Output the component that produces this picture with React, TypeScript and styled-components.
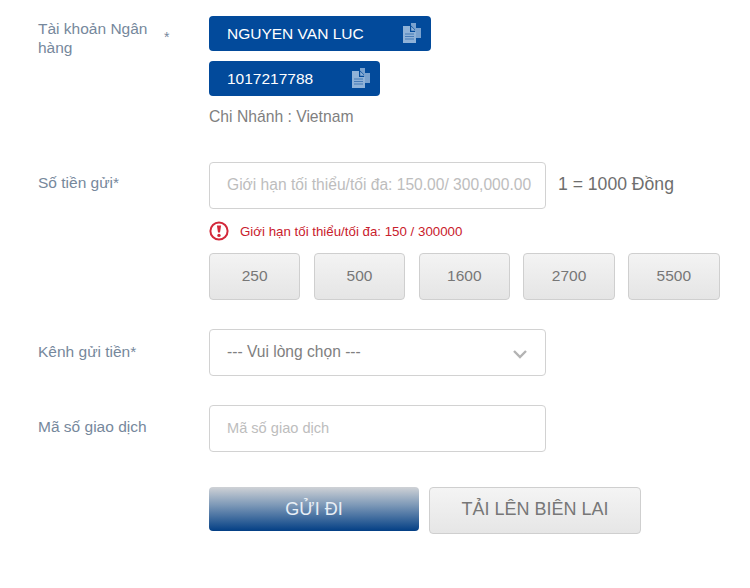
import React from 'react';
import styled, { createGlobalStyle } from 'styled-components';

const GlobalStyle = createGlobalStyle`
  html, body {
    margin: 0;
    background: #ffffff;
    font-family: "Liberation Sans", Arial, sans-serif;
  }
`;

const Page = styled.div`
  width: 750px;
  height: 588px;
  padding: 16px 30px 0 38px;
  box-sizing: border-box;
  overflow: hidden;
`;

const Row = styled.div<{ $mb: number }>`
  display: grid;
  grid-template-columns: 171px 337px auto;
  margin-bottom: ${(p) => p.$mb}px;
`;

const LabelCell = styled.div<{ $pt: number }>`
  display: flex;
  align-items: flex-start;
  padding-top: ${(p) => p.$pt}px;
  color: #76889c;
  font-size: 15.5px;
  line-height: 19px;
`;

const LabelText = styled.span`
  width: 118px;
`;

const Star = styled.span`
  margin-left: 8px;
  margin-top: 9px;
  font-size: 14px;
`;

const Stack = styled.div`
  grid-column: 2 / 4;
  display: flex;
  flex-direction: column;
  align-items: flex-start;
`;

const CopyPill = styled.div<{ $w: number }>`
  width: ${(p) => p.$w}px;
  height: 35px;
  margin-bottom: 10px;
  padding: 0 9px 0 18px;
  box-sizing: border-box;
  display: flex;
  align-items: center;
  justify-content: space-between;
  background: #024a9b;
  border-radius: 4px;
  color: #ffffff;
  font-size: 15.5px;
`;

const Branch = styled.div`
  color: #7f7f7f;
  font-size: 15.7px;
  line-height: 18px;
  margin-top: 2px;
`;

const TextBox = styled.input<{ $fs: number }>`
  width: 337px;
  height: 47px;
  padding: 0 6px 2px 17px;
  box-sizing: border-box;
  border: 1px solid #d2d2d2;
  border-radius: 4px;
  background: #ffffff;
  font-family: inherit;
  font-size: ${(p) => p.$fs}px;
  outline: none;

  &::placeholder {
    color: #bdbdbd;
    opacity: 1;
  }
`;

const Rate = styled.div`
  display: flex;
  align-items: center;
  height: 47px;
  padding-bottom: 2px;
  box-sizing: border-box;
  margin-left: 12px;
  color: #6e6e6e;
  font-size: 17.6px;
  white-space: nowrap;
`;

const ErrorLine = styled.div`
  grid-column: 2 / 4;
  display: flex;
  align-items: center;
  gap: 11px;
  height: 20px;
  margin-top: 12px;
  color: #c9202c;
  font-size: 13.3px;
`;

const Amounts = styled.div`
  grid-column: 2 / 4;
  display: flex;
  gap: 13.4px;
  margin-top: 12px;
`;

const AmountButton = styled.button`
  width: 91.4px;
  height: 47px;
  padding: 0 0 2px;
  border: 1px solid #cfcfcf;
  border-radius: 4px;
  background: linear-gradient(#f3f3f3, #e5e5e5);
  color: #777777;
  font-family: inherit;
  font-size: 15.5px;
`;

const SelectBox = styled.div`
  width: 337px;
  height: 47px;
  padding: 0 17px 2px;
  box-sizing: border-box;
  display: flex;
  align-items: center;
  justify-content: space-between;
  border: 1px solid #d2d2d2;
  border-radius: 4px;
  color: #808080;
  font-size: 15.6px;
`;

const ChevronWrap = styled.span`
  display: flex;
  margin-top: 4px;
`;

const Actions = styled.div`
  display: flex;
  align-items: flex-start;
  gap: 10px;
  margin-left: 171px;
`;

const SubmitButton = styled.button`
  width: 210px;
  height: 44px;
  padding: 0;
  border: 0;
  border-radius: 4px;
  background: linear-gradient(#cfd2d6, #7f9ab8 40%, #033f85);
  color: #e8eff6;
  font-family: inherit;
  font-size: 18px;
`;

const UploadButton = styled.button`
  width: 212px;
  height: 47px;
  padding: 0 0 2px;
  border: 1px solid #cfcfcf;
  border-radius: 4px;
  background: linear-gradient(#f4f4f4, #e6e6e6);
  color: #777777;
  font-family: inherit;
  font-size: 18px;
`;

function CopyIcon() {
  return (
    <svg width="20" height="21" viewBox="0 0 20 21" fill="#8fb2d8">
      <path d="M9 0h5v5h5v10h-6V6.5L9 2.5z" opacity="0.85" />
      <path d="M1 3h7v6h6v11H1z" />
      <path d="M9.2 3.5l4.3 4.3H9.2z" />
      <path d="M3 11h9M3 13.5h9M3 16h9" stroke="#3d74b3" strokeWidth="0.9" />
    </svg>
  );
}

function AlertIcon() {
  return (
    <svg width="20" height="20" viewBox="0 0 20 20">
      <circle cx="10" cy="10" r="8.6" fill="none" stroke="#d3283a" strokeWidth="2" />
      <path d="M7.9 4.6h4.2L11 11.6H9z" fill="#d3283a" />
      <circle cx="10" cy="14.4" r="1.7" fill="#d3283a" />
    </svg>
  );
}

function Chevron() {
  return (
    <svg width="16" height="10" viewBox="0 0 16 10" fill="none">
      <path d="M2 2l6 6 6-6" stroke="#b3b3b3" strokeWidth="2.4" />
    </svg>
  );
}

const amounts = [250, 500, 1600, 2700, 5500];

export default function App() {
  return (
    <Page>
      <GlobalStyle />
      <Row $mb={36}>
        <LabelCell $pt={3}>
          <LabelText>Tài khoản Ngân hàng</LabelText>
          <Star>*</Star>
        </LabelCell>
        <Stack>
          <CopyPill $w={222}>
            NGUYEN VAN LUC
            <CopyIcon />
          </CopyPill>
          <CopyPill $w={171}>
            1017217788
            <CopyIcon />
          </CopyPill>
          <Branch>Chi Nhánh : Vietnam</Branch>
        </Stack>
      </Row>
      <Row $mb={29}>
        <LabelCell $pt={11}>Số tiền gửi*</LabelCell>
        <TextBox $fs={15.6} placeholder="Giới hạn tối thiểu/tối đa: 150.00/ 300,000.00" />
        <Rate>1 = 1000 Đồng</Rate>
        <ErrorLine>
          <AlertIcon />
          Giới hạn tối thiểu/tối đa: 150 / 300000
        </ErrorLine>
        <Amounts>
          {amounts.map((a) => (
            <AmountButton key={a}>{a}</AmountButton>
          ))}
        </Amounts>
      </Row>
      <Row $mb={29}>
        <LabelCell $pt={13}>Kênh gửi tiền*</LabelCell>
        <SelectBox>
          --- Vui lòng chọn ---
          <ChevronWrap>
            <Chevron />
          </ChevronWrap>
        </SelectBox>
      </Row>
      <Row $mb={35}>
        <LabelCell $pt={12}>Mã số giao dịch</LabelCell>
        <TextBox $fs={14.6} placeholder="Mã số giao dịch" />
      </Row>
      <Actions>
        <SubmitButton>GỬI ĐI</SubmitButton>
        <UploadButton>TẢI LÊN BIÊN LAI</UploadButton>
      </Actions>
    </Page>
  );
}
